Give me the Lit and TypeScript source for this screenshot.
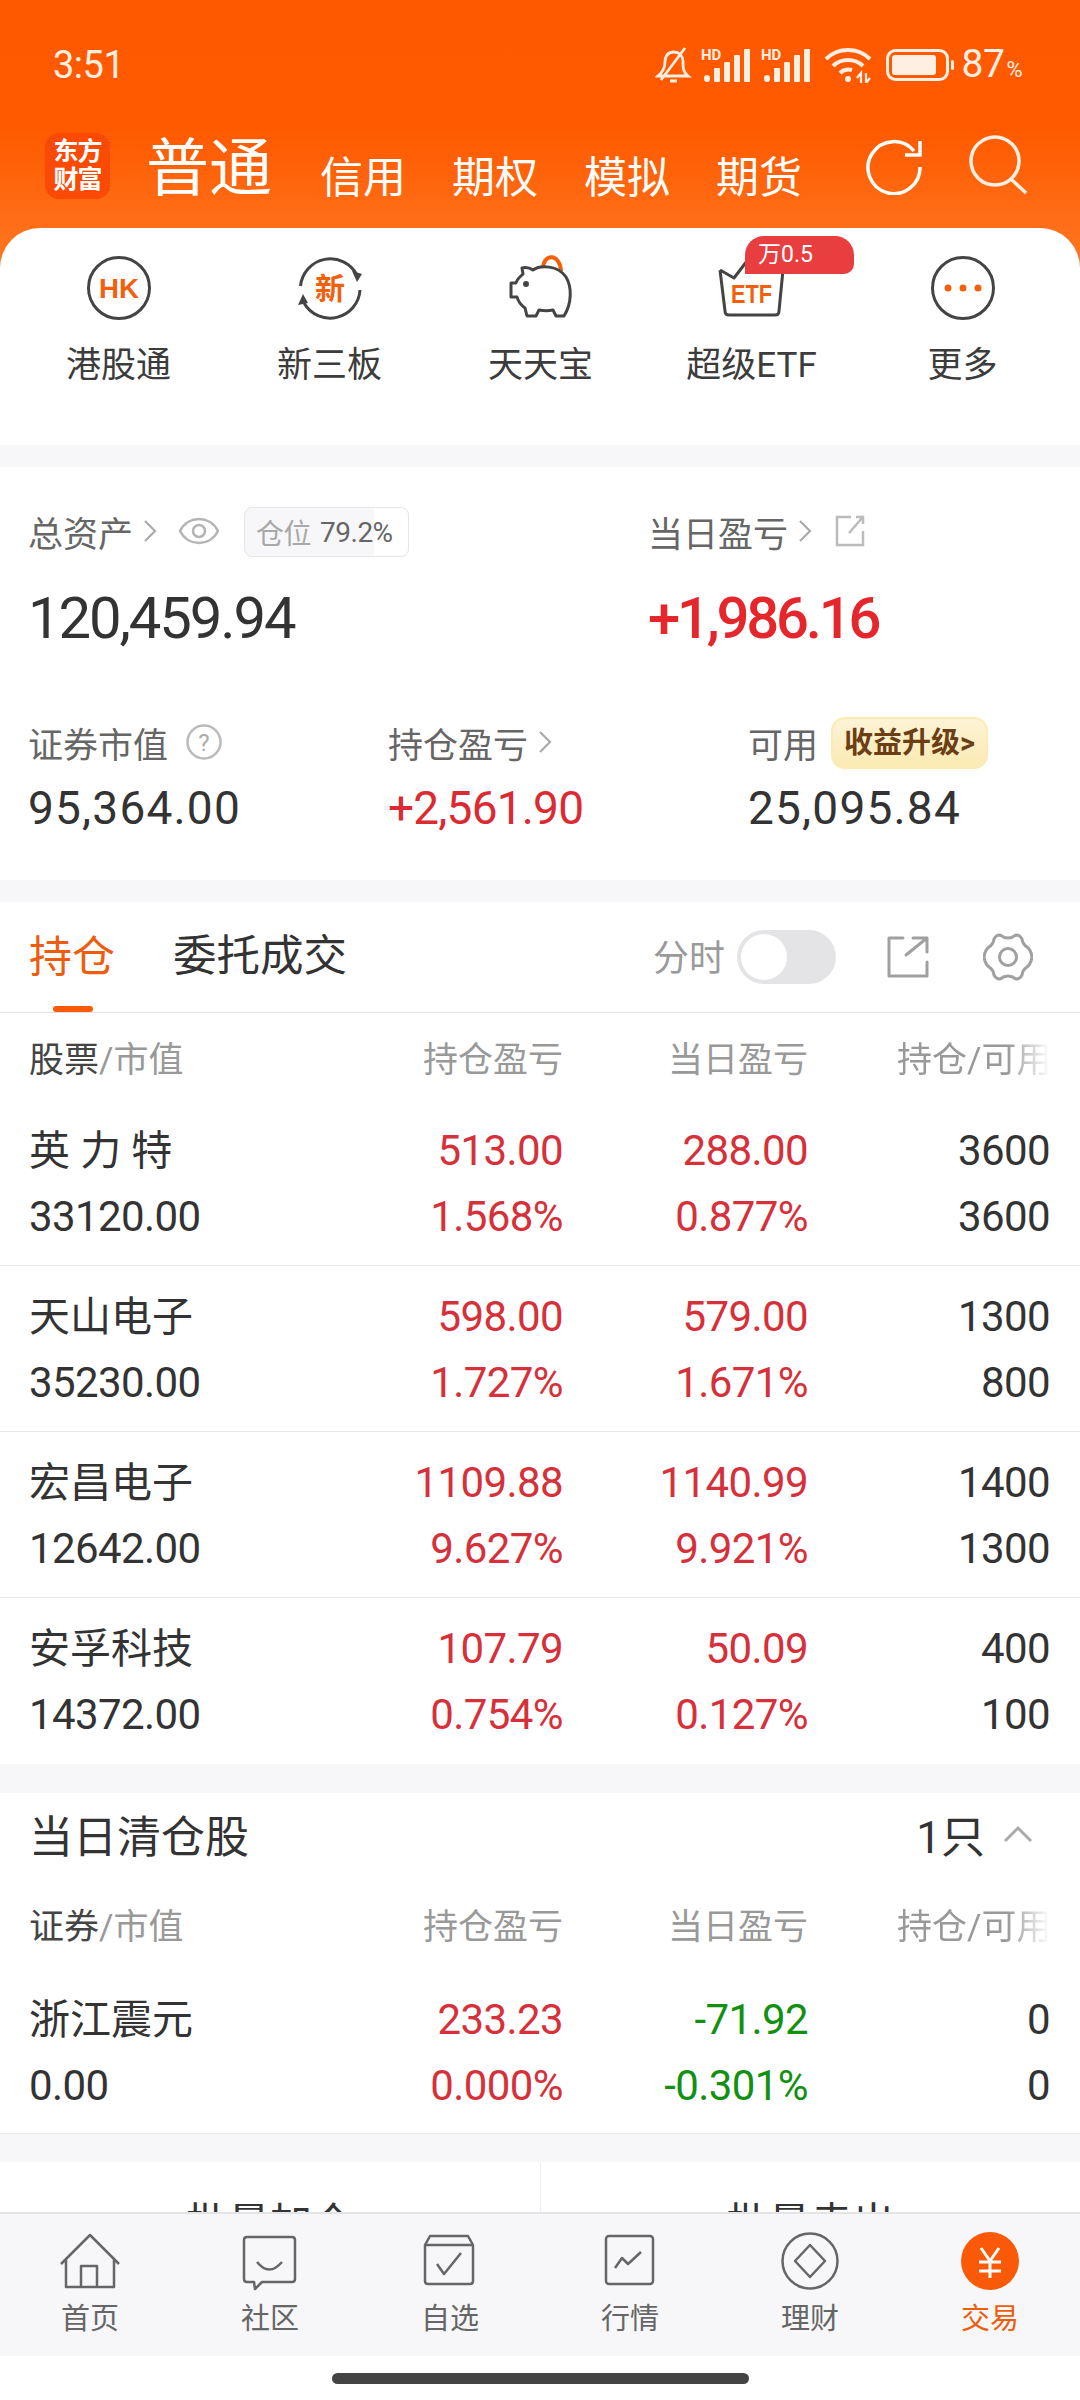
import { LitElement, css, html, svg } from "lit";
import { customElement } from "lit/decorators.js";

type Holding = {
  name: string;
  value: string;
  cells: [string, string, string, string, string, string];
  colors?: [string, string];
};

const holdings: Holding[] = [
  { name: "英 力 特", value: "33120.00", cells: ["513.00", "288.00", "3600", "1.568%", "0.877%", "3600"] },
  { name: "天山电子", value: "35230.00", cells: ["598.00", "579.00", "1300", "1.727%", "1.671%", "800"] },
  { name: "宏昌电子", value: "12642.00", cells: ["1109.88", "1140.99", "1400", "9.627%", "9.921%", "1300"] },
  { name: "安孚科技", value: "14372.00", cells: ["107.79", "50.09", "400", "0.754%", "0.127%", "100"] }
];

const cleared: Holding[] = [
  { name: "浙江震元", value: "0.00", cells: ["233.23", "-71.92", "0", "0.000%", "-0.301%", "0"], colors: ["up", "down"] }
];

const ORANGE = "#f2600c";
const INK = "#444";

const quickIcons = {
  hk: svg`<circle cx="35" cy="35" r="30.5" fill="none" stroke="${INK}" stroke-width="3"/>
    <text x="35" y="45" text-anchor="middle" font-family="Liberation Sans" font-weight="700" font-size="27" textLength="40" lengthAdjust="spacingAndGlyphs" fill="${ORANGE}">HK</text>`,
  xin: svg`<path d="M5.500 33A30 30 0 0 1 62 22M65 37A30 30 0 0 1 9 50" fill="none" stroke="${INK}" stroke-width="3"/>
    <path d="M57 18 67 21 62 29ZM3 52 13 50 8 41Z" fill="${INK}"/>
    <text x="35" y="46" text-anchor="middle" font-family="Noto Sans CJK SC" font-weight="700" font-size="30" fill="${ORANGE}">新</text>`,
  pig: svg`<path d="M37 16C37 0 54 0 55 18" fill="none" stroke="${ORANGE}" stroke-width="4"/>
    <path d="M16 15C20 14 24 15 27 17C34 12 52 12 60 24C66 34 66 50 58 63H50L47 57C43 58 38 58 33 57L30 63H21L19 55C15 52 12 48 11 44H5V30H10C11 26 14 24 17 21Z" fill="#fff" stroke="${INK}" stroke-width="3" stroke-linejoin="round"/>
    <circle cx="20" cy="31" r="3" fill="${INK}"/>`,
  etf: svg`<path d="M3 17 8 58Q8 62 12 62H58Q62 62 62 58L66 17M3 17 17 25 30 8" fill="none" stroke="${INK}" stroke-width="3" stroke-linejoin="round"/>
    <text x="34.500" y="50" text-anchor="middle" font-family="Liberation Sans" font-weight="700" font-size="25" textLength="41" lengthAdjust="spacingAndGlyphs" fill="${ORANGE}">ETF</text>`,
  more: svg`<circle cx="35" cy="35" r="30.500" fill="none" stroke="${INK}" stroke-width="3"/>
    <circle cx="20" cy="35" r="3.500" fill="${ORANGE}"/><circle cx="35" cy="35" r="3.500" fill="${ORANGE}"/><circle cx="50" cy="35" r="3.500" fill="${ORANGE}"/>`
};

const navIcons = {
  home: svg`<path d="M1 33 30 4 59 33M6 28V56H54V28M21 56V35H37V56"/>`,
  community: svg`<path d="M7 6H52Q55 6 55 9V48Q55 51 52 51H22L15 58 14 51H7Q4 51 4 48V9Q4 6 7 6ZM17 31Q29 46 42 31"/>`,
  watch: svg`<path d="M10 5H48L53 14H5ZM5 14V50Q5 53 8 53H50Q53 53 53 50V14M17 33 24 43 41 22"/>`,
  market: svg`<rect x="6" y="5" width="47" height="48" rx="3"/><path d="M15 37 22 27 28 33 41 21"/>`,
  wealth: svg`<circle cx="30" cy="30" r="27.500"/><path d="M30 14 45 30 30 46 15 30Z"/>`
};

@customElement("app-root")
export class AppRoot extends LitElement {
  static styles = css`
    :host {
      display: flex;
      flex-direction: column;
      width: 1080px;
      height: 2400px;
      overflow: hidden;
      background: #fff;
      color: #333;
      font-family: Roboto, "Noto Sans CJK SC", sans-serif;
    }

    svg {
      display: block;
      flex: none;
    }

    .top {
      background: linear-gradient(#ff5900 0, #ff5a00 130px, #ff6f18 228px, #ff7520 270px);
    }

    .status {
      height: 128px;
      box-sizing: border-box;
      padding: 46px 58px 0 53px;
      display: flex;
      align-items: flex-start;
      color: #ffeee2;
    }

    .time {
      font-size: 38px;
      line-height: 38px;
      letter-spacing: -0.5px;
    }

    .status-icons {
      margin-left: auto;
      display: flex;
      align-items: center;
      height: 38px;
    }

    .signal {
      overflow: visible;
    }

    .batt {
      font-size: 39px;
      line-height: 38px;
      margin: 3px 0 0 6px;
      letter-spacing: -0.5px;
    }

    .batt small {
      font-size: 22px;
      margin-left: 2px;
    }

    .main-nav {
      height: 100px;
      display: flex;
      align-items: flex-start;
      padding-left: 45px;
      color: #fff;
    }

    .logo {
      width: 65px;
      height: 66px;
      margin-top: 5px;
      border-radius: 14px;
      background: #fa4a06;
      font-size: 25px;
      line-height: 28px;
      letter-spacing: -1px;
      font-weight: 700;
      text-align: center;
      display: flex;
      flex-direction: column;
      justify-content: center;
    }

    .current {
      font-size: 63px;
      line-height: 76px;
      font-weight: 400;
      margin: 3px 48px 0 36px;
    }

    .mode {
      font-size: 43px;
      line-height: 56px;
      margin-top: 22px;
      margin-right: 46px;
    }

    .mode:nth-of-type(6) {
      margin-right: 62px;
    }

    .main-nav svg {
      margin-top: 7px;
    }

    .search {
      margin-left: 44px;
    }

    .quick {
      height: 217px;
      box-sizing: border-box;
      padding: 25px 13px 0;
      background: #fff;
      border-radius: 40px 40px 0 0;
      display: grid;
      grid-template-columns: repeat(5, 211px);
    }

    .quick-item {
      position: relative;
      display: flex;
      flex-direction: column;
      align-items: center;
      color: #3c3c3c;
      font-size: 35px;
      line-height: 50px;
      gap: 18px;
    }

    .tag {
      position: absolute;
      left: 99px;
      top: -17px;
      width: 109px;
      height: 38px;
      box-sizing: border-box;
      padding-left: 13px;
      border-radius: 19px 19px 10px 0;
      background: #e83e40;
      color: #fff;
      font-size: 23px;
      line-height: 38px;
    }

    .gap {
      height: 22px;
      background: #f7f7f9;
      flex: none;
    }

    .gap.wide {
      height: 29px;
    }

    .gap.mid {
      height: 28px;
    }

    .assets {
      height: 413px;
      box-sizing: border-box;
      padding: 40px 0 0 28px;
    }

    .assets-top {
      display: grid;
      grid-template-columns: 620px 1fr;
    }

    .assets-bottom {
      display: grid;
      grid-template-columns: 360px 360px 1fr;
      margin-top: 64px;
    }

    .label {
      display: flex;
      align-items: center;
      box-sizing: border-box;
      height: 50px;
      padding-bottom: 2px;
      color: #666;
      font-size: 35px;
    }

    .assets-bottom .label {
      height: 52px;
    }

    .total {
      font-size: 58px;
      line-height: 70px;
      letter-spacing: -2.100px;
      margin-top: 26px;
      color: #333;
    }

    .total.up {
      letter-spacing: -3.200px;
      font-weight: 500;
      color: #e5262b;
    }

    .amount {
      font-size: 46px;
      line-height: 60px;
      margin-top: 9px;
      letter-spacing: 1.200px;
      color: #333;
    }

    .amount.up {
      letter-spacing: -0.800px;
      color: #dc2a33;
    }

    .chip {
      position: relative;
      width: 165px;
      height: 50px;
      box-sizing: border-box;
      margin-left: 24px;
      margin-top: 2px;
      border: 1px solid #e6e6ea;
      border-radius: 8px;
      background: linear-gradient(to right, #f7f7f9 79.2%, #fff 79.2%);
      display: flex;
      align-items: center;
      padding-left: 11px;
      font-size: 28px;
      letter-spacing: -0.500px;
      color: #666;
      white-space: nowrap;
    }

    .chip span {
      color: #a8a8a8;
      margin-right: 9px;
    }

    .promo {
      width: 157px;
      height: 52px;
      flex: none;
      box-sizing: border-box;
      margin: 2px 0 0 13px;
      border: 2px solid #fcebb4;
      border-radius: 14px;
      background: linear-gradient(#fdf3d6, #fbeab3);
      color: #6b3e14;
      font-size: 29px;
      font-weight: 700;
      line-height: 48px;
      text-align: center;
      white-space: nowrap;
    }

    .tabs {
      height: 110px;
      box-sizing: content-box;
      border-bottom: 1px solid #e2e2e2;
      display: flex;
      align-items: center;
      padding: 0 47px 0 29px;
      flex: none;
    }

    .tab {
      position: relative;
      font-size: 43px;
      line-height: 56px;
      margin-right: 58px;
    }

    .tab.wide {
      font-size: 43.500px;
    }

    .tab.on {
      color: #ee5c0e;
    }

    .tab.on::after {
      content: "";
      position: absolute;
      left: 24px;
      bottom: -27px;
      width: 40px;
      height: 6px;
      border-radius: 3px;
      background: #f85a0a;
    }

    .tabs-side {
      margin-left: auto;
      display: flex;
      align-items: center;
      color: #9a9a9a;
      font-size: 36px;
    }

    .tabs-side span {
      margin-bottom: 4px;
    }

    .toggle {
      width: 99px;
      height: 54px;
      margin: 0 50px 0 12px;
      padding: 4px;
      box-sizing: border-box;
      border-radius: 27px;
      background: #e4e4e6;
    }

    .toggle i {
      display: block;
      width: 46px;
      height: 46px;
      border-radius: 50%;
      background: #fff;
    }

    .tabs-side svg + svg {
      margin-left: 53px;
    }

    .head,
    .row {
      display: grid;
      grid-template-columns: 284px 250px 245px 242px;
      padding: 0 30px 0 29px;
    }

    .head {
      height: 87px;
      align-items: center;
      color: #999;
      font-size: 35px;
      white-space: nowrap;
    }

    .head b {
      font-weight: 400;
      color: #444;
    }

    .head div + div {
      text-align: right;
    }

    .fade {
      width: 153px;
      justify-self: end;
      -webkit-mask-image: linear-gradient(to right, #000 72%, transparent 100%);
      mask-image: linear-gradient(to right, #000 72%, transparent 100%);
    }

    .row {
      height: 166px;
      box-sizing: border-box;
      padding-top: 2px;
      border-bottom: 1px solid #e8e8e8;
      align-content: center;
      font-size: 42px;
      line-height: 66px;
      letter-spacing: -0.600px;
      color: #333;
    }

    .row.solo {
      height: 167px;
      padding-top: 5px;
    }

    .row div {
      text-align: right;
    }

    .row .name {
      font-size: 41px;
      letter-spacing: 0;
      text-align: left;
    }

    .row .value {
      text-align: left;
    }

    .row .up {
      color: #d6303a;
    }

    .row .down {
      color: #129012;
    }

    .rows .row:last-child {
      border-bottom: none;
    }

    .cleared-title {
      height: 87px;
      box-sizing: border-box;
      padding: 0 47px 5px 29px;
      display: flex;
      align-items: center;
      font-size: 44px;
    }

    .cleared-title span {
      margin-left: auto;
      margin-right: 18px;
    }

    .batch {
      flex: 1;
      min-height: 0;
      overflow: hidden;
      display: grid;
      grid-template-columns: 1fr 1fr;
    }

    .batch div {
      padding-top: 41px;
      text-align: center;
      font-size: 42px;
      line-height: 42px;
      color: #333;
    }

    .batch div + div {
      border-left: 1px solid #eee;
    }

    .tabbar {
      height: 144px;
      box-sizing: border-box;
      flex: none;
      border-top: 2px solid #e4e4e6;
      background: #f7f7f9;
      display: grid;
      grid-template-columns: repeat(6, 180px);
    }

    .tabbar-item {
      display: flex;
      flex-direction: column;
      align-items: center;
      color: #666;
      font-size: 29px;
      line-height: 40px;
      padding-top: 17px;
      gap: 8px;
    }

    .tabbar-item.on {
      color: #ee5c0e;
    }

    .tabbar-item svg {
      fill: none;
      stroke: #666;
      stroke-width: 2.500;
      stroke-linejoin: round;
    }

    .homebar {
      height: 44px;
      flex: none;
      display: flex;
      justify-content: center;
      padding-top: 17px;
      box-sizing: border-box;
    }

    .homebar i {
      width: 417px;
      height: 11px;
      border-radius: 6px;
      background: #444;
    }
  `;

  private chevron(color = "#aaa") {
    return html`<svg width="14" height="24" viewBox="0 0 14 24" style="margin-left:10px">
      <path d="M2 2 12 12 2 22" fill="none" stroke=${color} stroke-width="2.200" />
    </svg>`;
  }

  private signal() {
    return html`<svg class="signal" width="52" height="36" viewBox="0 0 52 36" fill="#ffeee2">
      <text x="0" y="13" font-family="Roboto" font-weight="700" font-size="15">HD</text>
      <rect x="3" y="28" width="6" height="7" rx="3" />
      <rect x="13" y="21" width="6" height="14" rx="1" />
      <rect x="23" y="15" width="6" height="20" rx="1" />
      <rect x="33" y="8" width="6" height="27" rx="1" />
      <rect x="43" y="2" width="6" height="33" rx="1" />
    </svg>`;
  }

  private statusBar() {
    return html`<div class="status">
      <div class="time">3:51</div>
      <div class="status-icons">
        <svg width="38" height="38" viewBox="0 0 38 38" fill="none" stroke="#ffeee2" stroke-width="2.800" style="margin-right:8px">
          <path d="M3 30H33C28 26 28 22 28 15C28 10 24 6 19 6C12 6 10 11 10 16C10 22 8 26 3 30ZM15 35H22M30 2 6 34" />
        </svg>
        ${this.signal()}
        <div style="width:8px"></div>
        ${this.signal()}
        <svg width="48" height="36" viewBox="0 0 48 36" fill="none" stroke="#ffeee2" stroke-width="4" style="margin-left:11px">
          <path d="M2 12C14 0 34 0 46 12M9 19C17 11 31 11 39 19M16 26C19 23 24 22 28 23" />
          <circle cx="24" cy="32" r="3" fill="#ffeee2" stroke="none" />
          <path d="M37 36V26L33 31M42 26V36L46 31" stroke-width="2.200" />
        </svg>
        <svg width="70" height="32" viewBox="0 0 70 32" style="margin-left:14px">
          <rect x="1.500" y="1.500" width="60" height="29" rx="8" fill="none" stroke="#ffeee2" stroke-width="3" />
          <rect x="6" y="6" width="44" height="20" rx="3" fill="#ffeee2" />
          <rect x="65" y="11" width="3" height="10" rx="1.500" fill="#ffeee2" />
        </svg>
        <div class="batt">87<small>%</small></div>
      </div>
    </div>`;
  }

  private mainNav() {
    return html`<div class="main-nav">
      <div class="logo"><span>东方</span><span>财富</span></div>
      <div class="current">普通</div>
      <div class="mode">信用</div>
      <div class="mode">期权</div>
      <div class="mode">模拟</div>
      <div class="mode">期货</div>
      <svg width="60" height="60" viewBox="0 0 60 60" fill="none" stroke="#fff" stroke-width="3.500">
        <path d="M50 16A26 26 0 1 0 56 32M56 6V20H41" />
      </svg>
      <svg class="search" width="60" height="60" viewBox="0 0 60 60" fill="none" stroke="#ffeee2" stroke-width="3.500">
        <circle cx="27" cy="26" r="24" />
        <path d="M43 44 58 58" />
      </svg>
    </div>`;
  }

  private quick() {
    const items = [
      [quickIcons.hk, "港股通"],
      [quickIcons.xin, "新三板"],
      [quickIcons.pig, "天天宝"],
      [quickIcons.etf, "超级ETF"],
      [quickIcons.more, "更多"]
    ] as const;
    return html`<div class="quick">
      ${items.map(
        ([icon, label], i) => html`<div class="quick-item">
          <svg width="70" height="70" viewBox="0 0 70 70">${icon}</svg>
          <span>${label}</span>
          ${i === 3 ? html`<div class="tag">万0.5</div>` : null}
        </div>`
      )}
    </div>`;
  }

  private assets() {
    return html`<div class="assets">
      <div class="assets-top">
        <div>
          <div class="label">
            总资产${this.chevron()}
            <svg width="42" height="30" viewBox="0 0 42 30" fill="none" stroke="#b4b4b4" stroke-width="2.500" style="margin-left:21px">
              <path d="M2 15C10 -1 32 -1 40 15C32 31 10 31 2 15Z" />
              <circle cx="21" cy="15" r="6" />
            </svg>
            <div class="chip"><span>仓位</span>79.2%</div>
          </div>
          <div class="total">120,459.94</div>
        </div>
        <div>
          <div class="label">
            当日盈亏${this.chevron()}
            <svg width="30" height="32" viewBox="0 0 30 32" fill="none" stroke="#bbb" stroke-width="2.500" style="margin-left:23px">
              <path d="M16 2H2V30H28V16M14 18 28 2M21 2H28V9" />
            </svg>
          </div>
          <div class="total up">+1,986.16</div>
        </div>
      </div>
      <div class="assets-bottom">
        <div>
          <div class="label">
            证券市值
            <svg width="36" height="36" viewBox="0 0 36 36" style="margin-left:18px">
              <circle cx="18" cy="18" r="16.500" fill="none" stroke="#bbb" stroke-width="2.500" />
              <text x="18" y="27" text-anchor="middle" font-family="Roboto" font-size="24" fill="#aaa">?</text>
            </svg>
          </div>
          <div class="amount">95,364.00</div>
        </div>
        <div>
          <div class="label">持仓盈亏${this.chevron()}</div>
          <div class="amount up">+2,561.90</div>
        </div>
        <div>
          <div class="label">可用<div class="promo">收益升级&gt;</div></div>
          <div class="amount">25,095.84</div>
        </div>
      </div>
    </div>`;
  }

  private tabs() {
    return html`<div class="tabs">
      <div class="tab on">持仓</div>
      <div class="tab wide">委托成交</div>
      <div class="tabs-side">
        <span>分时</span>
        <div class="toggle"><i></i></div>
        <svg width="44" height="44" viewBox="0 0 44 44" fill="none" stroke="#a0a0a0" stroke-width="3" stroke-linejoin="round" stroke-linecap="round">
          <path d="M17 3H3V41H41V27M20 20 41 3M27 3H41V17" />
        </svg>
        <svg width="50" height="48" viewBox="0 0 50 48" fill="none" stroke="#a0a0a0" stroke-width="3">
          <path d="M17 2Q21 5 25 5Q29 5 33 2Q37 2 39 6Q39.500 11 44 14Q48 17 49 24Q48 31 44 34Q39.500 37 39 42Q37 46 33 46Q29 43 25 43Q21 43 17 46Q13 46 11 42Q10.500 37 6 34Q2 31 1 24Q2 17 6 14Q10.500 11 11 6Q13 2 17 2Z" stroke-linejoin="round" />
          <circle cx="25" cy="24" r="8.500" />
        </svg>
      </div>
    </div>`;
  }

  private head(first: string) {
    return html`<div class="head">
      <div><b>${first}</b>/市值</div>
      <div>持仓盈亏</div>
      <div>当日盈亏</div>
      <div class="fade">持仓/可用</div>
    </div>`;
  }

  private row(item: Holding, solo = false) {
    const [a, b] = item.colors ?? ["up", "up"];
    const c = item.cells;
    return html`<div class="row ${solo ? "solo" : ""}">
      <div class="name">${item.name}</div>
      <div class=${a}>${c[0]}</div>
      <div class=${b}>${c[1]}</div>
      <div>${c[2]}</div>
      <div class="value">${item.value}</div>
      <div class=${a}>${c[3]}</div>
      <div class=${b}>${c[4]}</div>
      <div>${c[5]}</div>
    </div>`;
  }

  private tabbar() {
    const items = [
      [navIcons.home, "首页"],
      [navIcons.community, "社区"],
      [navIcons.watch, "自选"],
      [navIcons.market, "行情"],
      [navIcons.wealth, "理财"]
    ] as const;
    return html`<div class="tabbar">
      ${items.map(
        ([icon, label]) => html`<div class="tabbar-item">
          <svg width="60" height="60" viewBox="0 0 60 60">${icon}</svg>
          <span>${label}</span>
        </div>`
      )}
      <div class="tabbar-item on">
        <svg width="60" height="60" viewBox="0 0 60 60" style="stroke:none">
          <circle cx="30" cy="30" r="29" fill="#fa5a08" />
          <path d="M21 17 30 30 39 17M19 31H41M19 40H41M30 30V47" fill="none" stroke="#fff" stroke-width="3" />
        </svg>
        <span>交易</span>
      </div>
    </div>`;
  }

  render() {
    return html`
      <div class="top">${this.statusBar()}${this.mainNav()}${this.quick()}</div>
      <div class="gap"></div>
      ${this.assets()}
      <div class="gap"></div>
      ${this.tabs()}
      ${this.head("股票")}
      <div class="rows">${holdings.map(h => this.row(h))}</div>
      <div class="gap wide"></div>
      <div class="cleared-title">
        当日清仓股
        <span>1只</span>
        <svg width="30" height="18" viewBox="0 0 30 18" fill="none" stroke="#aaa" stroke-width="3">
          <path d="M2 16 15 3 28 16" />
        </svg>
      </div>
      ${this.head("证券")}
      ${cleared.map(h => this.row(h, true))}
      <div class="gap mid"></div>
      <div class="batch"><div>批量加仓</div><div>批量卖出</div></div>
      ${this.tabbar()}
      <div class="homebar"><i></i></div>
    `;
  }
}
